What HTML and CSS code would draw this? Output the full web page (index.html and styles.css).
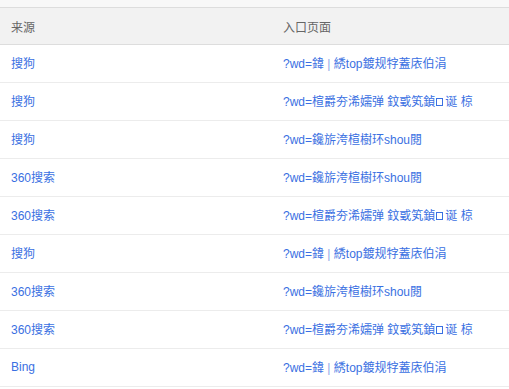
FILE: index.html
```html
<!DOCTYPE html>
<html lang="zh-CN">
<head>
<meta charset="utf-8">
<link rel="stylesheet" href="styles.css">
</head>
<body>
<div class="topstrip"></div>
<div class="table">
  <div class="row head"><div class="c1">来源</div><div class="c2">入口页面</div></div>
  <div class="row"><div class="c1 link">搜狗</div><div class="c2 link">?wd=鍏 <span class="bar">|</span> 綉top鍍规牸蓋庡伯涓</div></div>
  <div class="row"><div class="c1 link">搜狗</div><div class="c2 link">?wd=楦爵夯浠嬬弹 鈫戜笂鍞<span class="tofu"></span>诞 椋</div></div>
  <div class="row"><div class="c1 link">搜狗</div><div class="c2 link">?wd=鑱旂洿楦樹环shou閱</div></div>
  <div class="row"><div class="c1 link">360搜索</div><div class="c2 link">?wd=鑱旂洿楦樹环shou閱</div></div>
  <div class="row"><div class="c1 link">360搜索</div><div class="c2 link">?wd=楦爵夯浠嬬弹 鈫戜笂鍞<span class="tofu"></span>诞 椋</div></div>
  <div class="row"><div class="c1 link">搜狗</div><div class="c2 link">?wd=鍏 <span class="bar">|</span> 綉top鍍规牸蓋庡伯涓</div></div>
  <div class="row"><div class="c1 link">360搜索</div><div class="c2 link">?wd=鑱旂洿楦樹环shou閱</div></div>
  <div class="row"><div class="c1 link">360搜索</div><div class="c2 link">?wd=楦爵夯浠嬬弹 鈫戜笂鍞<span class="tofu"></span>诞 椋</div></div>
  <div class="row"><div class="c1 link">Bing</div><div class="c2 link">?wd=鍏 <span class="bar">|</span> 綉top鍍规牸蓋庡伯涓</div></div>
</div>
</body>
</html>
```
FILE: styles.css
```css
html, body {
  margin: 0;
  padding: 0;
  background: #fff;
}
body {
  font-family: "Liberation Sans", "Noto Sans CJK SC", sans-serif;
  font-size: 12px;
  color: #666;
}
.topstrip {
  height: 7px;
  background: #f8f8f8;
  border-bottom: 1px solid #dddddd;
}
.table {
  display: flex;
  flex-direction: column;
}
.row {
  display: grid;
  grid-template-columns: 272px 1fr;
  height: 35px;
  padding-bottom: 2px;
  align-items: center;
  border-bottom: 1px solid #ececec;
  white-space: nowrap;
}
.row.head {
  height: 36px;
  padding-bottom: 0;
  background: #f2f2f2;
  border-bottom: 1px solid #dddddd;
}
.c1, .c2 {
  padding-left: 11px;
}
.link {
  color: #3a70e2;
}
.bar {
  color: #8aa6e8;
}
.tofu {
  display: inline-block;
  width: 7px;
  height: 8px;
  border: 1px solid #3a70e2;
  box-sizing: border-box;
  margin: 0 2px 0 1px;
}
```
